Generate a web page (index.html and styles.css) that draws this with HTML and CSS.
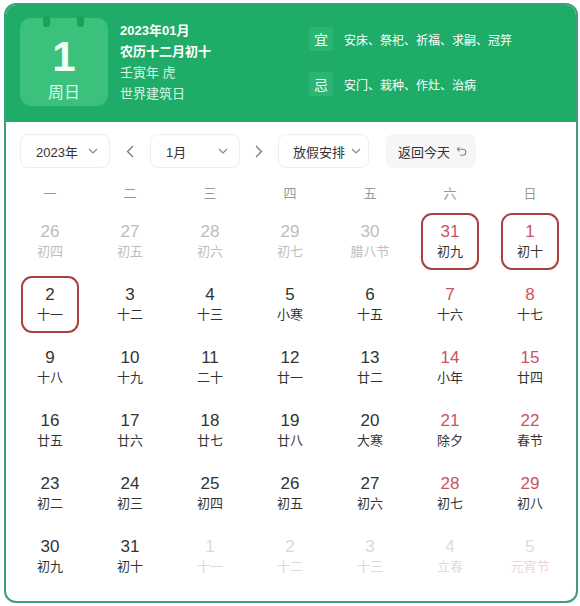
FILE: index.html
```html
<!DOCTYPE html>
<html lang="zh">
<head>
<meta charset="utf-8">
<link rel="stylesheet" href="styles.css">
</head>
<body>
<div class="card">
  <div class="header">
    <div class="dateicon">
      <span class="ring ring-l"></span><span class="ring ring-r"></span>
      <div class="bignum">1</div>
      <div class="week">周日</div>
    </div>
    <div class="info">
      <div class="strong">2023年01月</div>
      <div class="strong">农历十二月初十</div>
      <div class="light">壬寅年 虎</div>
      <div class="light">世界建筑日</div>
    </div>
    <div class="yiji">
      <div class="yjrow"><span class="badge">宜</span><span>安床、祭祀、祈福、求嗣、冠笄</span></div>
      <div class="yjrow"><span class="badge">忌</span><span>安门、栽种、作灶、治病</span></div>
    </div>
  </div>
  <div class="body">
    <div class="toolbar">
      <div class="select sel-year"><span>2023年</span><svg class="chev" width="10" height="6" viewBox="0 0 10 6"><polyline points="1,1 5,5 9,1" fill="none" stroke="#888" stroke-width="1.2"/></svg></div>
      <div class="arrow"><svg width="8" height="13" viewBox="0 0 8 13"><polyline points="7,1 1.5,6.5 7,12" fill="none" stroke="#777" stroke-width="1.3"/></svg></div>
      <div class="select sel-month"><span>1月</span><svg class="chev" width="10" height="6" viewBox="0 0 10 6"><polyline points="1,1 5,5 9,1" fill="none" stroke="#888" stroke-width="1.2"/></svg></div>
      <div class="arrow"><svg width="8" height="13" viewBox="0 0 8 13"><polyline points="1,1 6.5,6.5 1,12" fill="none" stroke="#777" stroke-width="1.3"/></svg></div>
      <div class="select sel-holiday"><span>放假安排</span><svg class="chev" width="10" height="6" viewBox="0 0 10 6"><polyline points="1,1 5,5 9,1" fill="none" stroke="#888" stroke-width="1.2"/></svg></div>
      <div class="today"><span>返回今天</span><svg width="11" height="11" viewBox="0 0 11 11"><path d="M3.5 1.2 L1.3 3.3 L3.5 5.4 M1.5 3.3 H6.8 A3 3 0 0 1 6.8 9.3 H4" fill="none" stroke="#888" stroke-width="1.1"/></svg></div>
    </div>
    <div class="grid">
      <div class="wd">一</div><div class="wd">二</div><div class="wd">三</div><div class="wd">四</div><div class="wd">五</div><div class="wd">六</div><div class="wd">日</div>

      <div class="cell other"><div class="day"><b>26</b><i>初四</i></div></div>
      <div class="cell other"><div class="day"><b>27</b><i>初五</i></div></div>
      <div class="cell other"><div class="day"><b>28</b><i>初六</i></div></div>
      <div class="cell other"><div class="day"><b>29</b><i>初七</i></div></div>
      <div class="cell other"><div class="day"><b>30</b><i>腊八节</i></div></div>
      <div class="cell wk"><div class="day sel"><b>31</b><i>初九</i></div></div>
      <div class="cell wk"><div class="day sel"><b>1</b><i>初十</i></div></div>

      <div class="cell"><div class="day sel"><b>2</b><i>十一</i></div></div>
      <div class="cell"><div class="day"><b>3</b><i>十二</i></div></div>
      <div class="cell"><div class="day"><b>4</b><i>十三</i></div></div>
      <div class="cell"><div class="day"><b>5</b><i>小寒</i></div></div>
      <div class="cell"><div class="day"><b>6</b><i>十五</i></div></div>
      <div class="cell wk"><div class="day"><b>7</b><i>十六</i></div></div>
      <div class="cell wk"><div class="day"><b>8</b><i>十七</i></div></div>

      <div class="cell"><div class="day"><b>9</b><i>十八</i></div></div>
      <div class="cell"><div class="day"><b>10</b><i>十九</i></div></div>
      <div class="cell"><div class="day"><b>11</b><i>二十</i></div></div>
      <div class="cell"><div class="day"><b>12</b><i>廿一</i></div></div>
      <div class="cell"><div class="day"><b>13</b><i>廿二</i></div></div>
      <div class="cell wk"><div class="day"><b>14</b><i>小年</i></div></div>
      <div class="cell wk"><div class="day"><b>15</b><i>廿四</i></div></div>

      <div class="cell"><div class="day"><b>16</b><i>廿五</i></div></div>
      <div class="cell"><div class="day"><b>17</b><i>廿六</i></div></div>
      <div class="cell"><div class="day"><b>18</b><i>廿七</i></div></div>
      <div class="cell"><div class="day"><b>19</b><i>廿八</i></div></div>
      <div class="cell"><div class="day"><b>20</b><i>大寒</i></div></div>
      <div class="cell wk"><div class="day"><b>21</b><i>除夕</i></div></div>
      <div class="cell wk"><div class="day"><b>22</b><i>春节</i></div></div>

      <div class="cell"><div class="day"><b>23</b><i>初二</i></div></div>
      <div class="cell"><div class="day"><b>24</b><i>初三</i></div></div>
      <div class="cell"><div class="day"><b>25</b><i>初四</i></div></div>
      <div class="cell"><div class="day"><b>26</b><i>初五</i></div></div>
      <div class="cell"><div class="day"><b>27</b><i>初六</i></div></div>
      <div class="cell wk"><div class="day"><b>28</b><i>初七</i></div></div>
      <div class="cell wk"><div class="day"><b>29</b><i>初八</i></div></div>

      <div class="cell"><div class="day"><b>30</b><i>初九</i></div></div>
      <div class="cell"><div class="day"><b>31</b><i>初十</i></div></div>
      <div class="cell next"><div class="day"><b>1</b><i>十一</i></div></div>
      <div class="cell next"><div class="day"><b>2</b><i>十二</i></div></div>
      <div class="cell next"><div class="day"><b>3</b><i>十三</i></div></div>
      <div class="cell next wk"><div class="day"><b>4</b><i>立春</i></div></div>
      <div class="cell next wk"><div class="day"><b>5</b><i>元宵节</i></div></div>
    </div>
  </div>
</div>
</body>
</html>
```

FILE: styles.css
```css
* { box-sizing: border-box; }
html, body { margin: 0; padding: 0; background: #ffffff; }
body {
  font-family: "Liberation Sans", "Noto Sans CJK SC", sans-serif;
  color: #333;
}
.card {
  margin: 3px 0 0 4px;
  width: 574px;
  height: 600px;
  border: 2px solid #3f9d78;
  border-radius: 12px;
  overflow: hidden;
  background: #fff;
}
.header {
  height: 117px;
  background: #1fac69;
  display: flex;
  align-items: flex-start;
  padding: 13px 0 0 14px;
  color: #fff;
}
.dateicon {
  position: relative;
  width: 88px;
  height: 88px;
  border-radius: 11px;
  background: #3cc17d;
  display: flex;
  flex-direction: column;
  align-items: center;
  flex: 0 0 88px;
}
.ring {
  position: absolute;
  top: -2px;
  width: 7px;
  height: 11px;
  border-radius: 4px;
  background: #1f9e5c;
}
.ring-l { left: 23px; }
.ring-r { left: 57px; }
.bignum {
  margin-top: 16px;
  font-size: 42px;
  line-height: 46px;
  font-weight: bold;
  color: #f2fff7;
}
.week {
  margin-top: 3px;
  font-size: 16px;
  line-height: 20px;
  color: #d8f7e5;
}
.info {
  flex: 0 0 189px;
  margin-left: 12px;
  padding-top: 2px;
  font-size: 13px;
  line-height: 21px;
}
.info .strong { color: #ffffff; font-weight: bold; }
.info .light { color: #d6f6e3; }
.yiji {
  padding-top: 9px;
  display: flex;
  flex-direction: column;
  gap: 21px;
  font-size: 12px;
}
.yjrow {
  display: flex;
  align-items: center;
  gap: 11px;
  height: 24px;
}
.badge {
  width: 24px;
  height: 24px;
  border-radius: 3px;
  background: #2cb574;
  display: flex;
  align-items: center;
  justify-content: center;
  font-size: 14px;
  color: #f0fff6;
}
.body {
  padding: 12px 0 0 4px;
}
.toolbar {
  display: flex;
  align-items: center;
  height: 34px;
  padding-left: 10px;
  font-size: 13px;
  color: #333;
}
.select {
  height: 34px;
  border: 1px solid #eeeeee;
  border-radius: 8px;
  display: flex;
  align-items: center;
  justify-content: space-between;
  padding: 0 11px 0 15px;
}
.sel-year { width: 90px; }
.sel-month { width: 90px; }
.sel-holiday { width: 91px; padding-left: 14px; padding-right: 7px; }
.arrow {
  width: 40px;
  display: flex;
  justify-content: center;
  align-items: center;
}
.arrow:nth-child(4) { width: 38px; }
.today {
  margin-left: 17px;
  width: 90px;
  height: 34px;
  border-radius: 8px;
  background: #f6f6f6;
  display: flex;
  align-items: center;
  padding-left: 12px;
  gap: 6px;
}
.grid {
  margin-top: 6px;
  display: grid;
  grid-template-columns: repeat(7, 80px);
  grid-template-rows: 36px repeat(6, 63px);
}
.wd {
  display: flex;
  align-items: center;
  justify-content: center;
  font-size: 13px;
  color: #999;
}
.cell {
  display: flex;
  align-items: center;
  justify-content: center;
}
.day {
  width: 58px;
  height: 57px;
  border: 2px solid transparent;
  border-radius: 11px;
  display: flex;
  flex-direction: column;
  align-items: center;
  justify-content: center;
}
.day.sel { border-color: #a8403f; }
.day b {
  font-weight: normal;
  font-size: 17px;
  line-height: 20px;
  color: #333;
}
.day i {
  font-style: normal;
  font-size: 13px;
  line-height: 20px;
  color: #333;
}
.cell.wk .day b { color: #c9545f; }
.cell.other .day b, .cell.other .day i { color: #bdbdbd; }
.cell.next .day b, .cell.next .day i { color: #d9d9d9; }
.cell.next.wk .day b, .cell.next.wk .day i { color: #ecd6da; }
```
